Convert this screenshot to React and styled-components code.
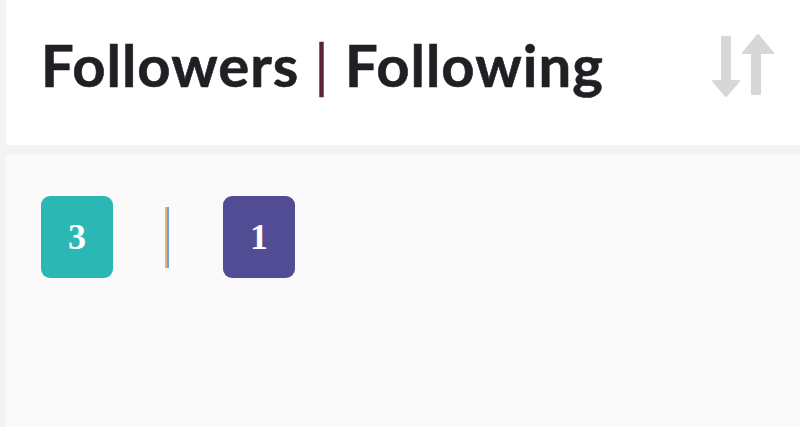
import React from "react";
import styled, { createGlobalStyle } from "styled-components";

const Global = createGlobalStyle`
  html, body { margin: 0; padding: 0; }
  body { background: #f3f3f3; width: 800px; height: 427px; overflow: hidden; }
`;

const Panel = styled.div`
  margin-left: 6px;
  height: 427px;
  display: flex;
  flex-direction: column;
  gap: 10px;
`;

const Header = styled.header`
  height: 145px;
  background: #ffffff;
  display: flex;
  align-items: center;
  justify-content: space-between;
  padding: 0 25px 16px 35px;
  box-sizing: border-box;
`;

const Title = styled.h1`
  margin: 0;
  font-family: "Lato", "Open Sans", sans-serif;
  font-weight: 700;
  font-size: 58px;
  color: #1f1f24;
  letter-spacing: 1px;
  line-height: 1;
  -webkit-text-stroke: 0.6px #1f1f24;
`;

const Pipe = styled.span`
  color: #5a2535;
  font-weight: 400;
  -webkit-text-stroke: 0.4px #5a2535;
`;

const Body = styled.main`
  flex: 1;
  background: #fafafa;
  padding: 41px 35px;
  display: flex;
  align-items: flex-start;
`;

const Counts = styled.div`
  display: flex;
  align-items: center;
`;

const Badge = styled.div`
  width: 72px;
  height: 82px;
  border-radius: 9px;
  background: ${(p) => p.$bg};
  color: #ffffff;
  display: flex;
  align-items: center;
  justify-content: center;
  font-family: "Liberation Serif", "DejaVu Serif", serif;
  font-weight: 700;
  font-size: 36px;
`;

const Divider = styled.span`
  width: 4px;
  height: 61px;
  margin: 0 54px 0 52px;
  background: linear-gradient(to right, #f2b26a 50%, #5fa4ef 50%);
`;

const SortIcon = () => (
  <svg width="64" height="66" viewBox="0 0 64 66" fill="#d7d7d7">
    <rect x="10" y="4" width="10" height="47" rx="1" />
    <polygon points="2,49 28,49 15,64" strokeLinejoin="round" stroke="#d7d7d7" strokeWidth="2" />
    <rect x="40" y="19" width="10" height="44" rx="1" />
    <polygon points="32,21 62,21 47,3" strokeLinejoin="round" stroke="#d7d7d7" strokeWidth="2" />
  </svg>
);

export default function App() {
  return (
    <>
      <Global />
      <Panel>
        <Header>
          <Title>
            Followers <Pipe>|</Pipe> Following
          </Title>
          <SortIcon />
        </Header>
        <Body>
          <Counts>
            <Badge $bg="#2bb8b4">3</Badge>
            <Divider />
            <Badge $bg="#524c94">1</Badge>
          </Counts>
        </Body>
      </Panel>
    </>
  );
}
